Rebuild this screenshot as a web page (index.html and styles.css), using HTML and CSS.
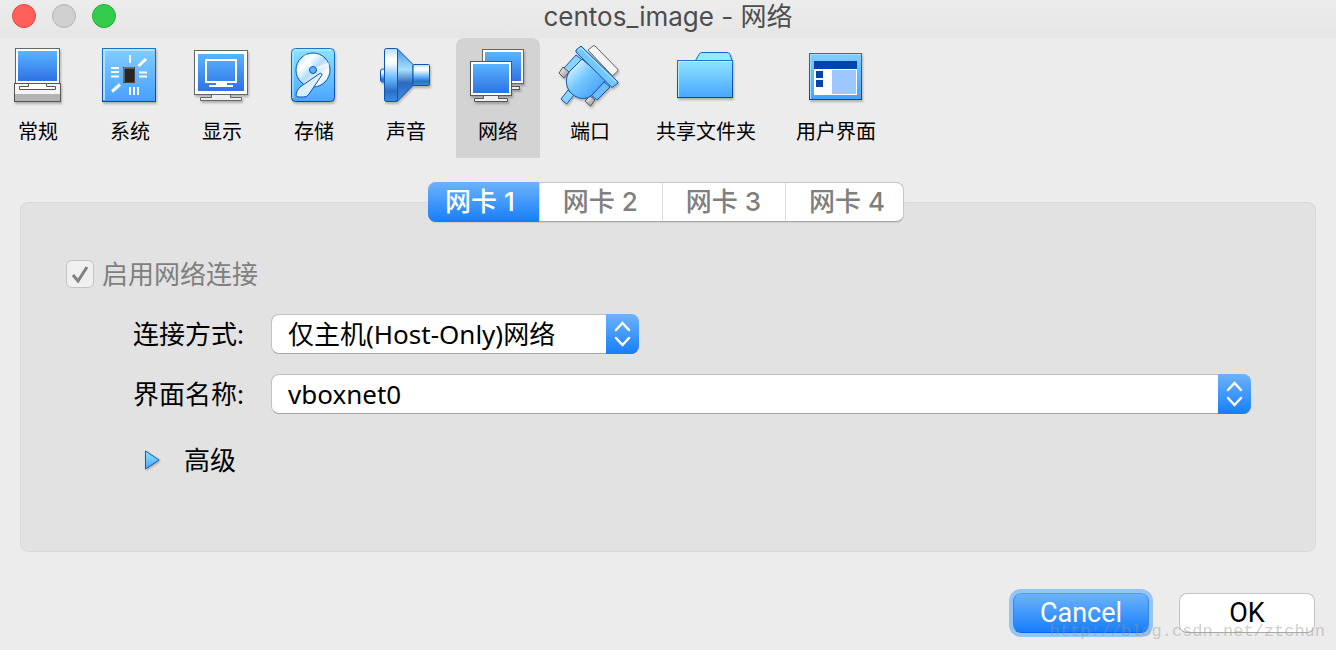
FILE: index.html
```
<!DOCTYPE html>
<html lang="zh-CN">
<head>
<meta charset="utf-8">
<title>centos_image - 网络</title>
<link rel="stylesheet" href="styles.css">
</head>
<body>
<svg class="defs" width="0" height="0" aria-hidden="true">
  <defs>
    <linearGradient id="screen" x1="0" y1="0" x2="0" y2="1"><stop offset="0" stop-color="#58b4ff"/><stop offset="1" stop-color="#2f72e4"/></linearGradient>
    <linearGradient id="plate" x1="0" y1="0" x2="0" y2="1"><stop offset="0" stop-color="#82ceff"/><stop offset="1" stop-color="#46a0ff"/></linearGradient>
    <linearGradient id="folder" x1="0" y1="0" x2="0" y2="1"><stop offset="0" stop-color="#8ce4ff"/><stop offset="1" stop-color="#4aa6ff"/></linearGradient>
    <linearGradient id="edge" x1="0" y1="0" x2="0" y2="1"><stop offset="0" stop-color="#1c74c8"/><stop offset="1" stop-color="#0c48a4"/></linearGradient>
    <linearGradient id="horn" x1="0" y1="0" x2="0" y2="1"><stop offset="0" stop-color="#b4dcf8"/><stop offset=".2" stop-color="#ffffff"/><stop offset=".3" stop-color="#f0f8ff"/><stop offset=".55" stop-color="#6cbcff"/><stop offset=".8" stop-color="#2c70c8"/><stop offset="1" stop-color="#3c8ce0"/></linearGradient>
    <linearGradient id="cone" x1="0" y1="0" x2="0" y2="1"><stop offset="0" stop-color="#4098e0"/><stop offset=".4" stop-color="#a8e0ff"/><stop offset=".65" stop-color="#2c68c0"/><stop offset="1" stop-color="#3c90e8"/></linearGradient>
    <linearGradient id="plug" x1="0" y1="0" x2="1" y2="1"><stop offset=".1" stop-color="#e8f8ff"/><stop offset=".45" stop-color="#74c8ff"/><stop offset="1" stop-color="#3490f0"/></linearGradient>
    <linearGradient id="metal" x1="0" y1="0" x2="1" y2="1"><stop offset="0" stop-color="#fff"/><stop offset="1" stop-color="#888"/></linearGradient>
    <linearGradient id="disc" x1="0" y1="0" x2="1" y2="1"><stop offset="0" stop-color="#a8d8ff"/><stop offset=".3" stop-color="#ffffff"/><stop offset=".5" stop-color="#b4dcff"/><stop offset=".75" stop-color="#ffffff"/><stop offset="1" stop-color="#90c4f8"/></linearGradient>
  </defs>
</svg>
<main class="window">
  <header class="titlebar">
    <div class="lights">
      <button class="light close" aria-label="关闭"></button>
      <button class="light minimize" aria-label="最小化"></button>
      <button class="light maximize" aria-label="缩放"></button>
    </div>
    <h1 class="title">centos_image - 网络</h1>
  </header>

  <nav class="toolbar">
    <button class="tool">
      <svg class="icon" viewBox="0 0 64 64">
        <rect x="9.500" y="4.500" width="44" height="35" fill="#fff" stroke="#666"/>
        <rect x="12" y="7" width="39" height="30" fill="url(#screen)"/>
        <rect x="8.500" y="39.500" width="46" height="18" fill="#f4f4f4" stroke="#555"/>
        <rect x="9" y="50" width="45" height="7" fill="#b4b4b4"/>
        <path d="M22.500 39.500v3h-9v3h36v-3h-9v-3z" fill="#fff" stroke="#555"/>
      </svg>
      <span>常规</span>
    </button>
    <button class="tool">
      <svg class="icon" viewBox="0 0 64 64">
        <rect x="4.500" y="4.500" width="53" height="53" fill="url(#plate)" stroke="url(#edge)"/>
        <path d="M6 56V6h50" fill="none" stroke="#b4e2ff" stroke-width="2"/>
        <rect x="25.500" y="23.500" width="11" height="15" fill="#262626" stroke="#444"/>
        <path d="M26 38V24h10" fill="none" stroke="#999"/>
        <path d="M32 11v8M41 28.500h8M41 32.500h8M13 24h8M13 28h8M13 32.500h8M32 43v8M36 43v8M40 43v8" stroke="#fff" stroke-width="2"/>
        <path d="M40.500 22l7.500-7M14 47.500l8-7" stroke="#fff" stroke-width="3"/>
      </svg>
      <span>系统</span>
    </button>
    <button class="tool">
      <svg class="icon" viewBox="0 0 64 64">
        <path d="M21.500 50.500h19v3h11v3h-41v-3h11z" fill="#eee" stroke="#666"/>
        <rect x="4.500" y="6.500" width="53" height="44" fill="#fff" stroke="#666"/>
        <rect x="8" y="10" width="46" height="37" fill="url(#screen)"/>
        <path d="M16 16h30v22H16z" fill="none" stroke="#fff" stroke-width="2"/>
        <path d="M26 38h11v3h6v2H19v-2h7z" fill="#fff"/>
      </svg>
      <span>显示</span>
    </button>
    <button class="tool">
      <svg class="icon" viewBox="0 0 64 64">
        <rect x="9.500" y="4.500" width="43" height="53" rx="4" fill="url(#folder)" stroke="url(#edge)"/>
        <path d="M11 54V8q0-2 2-2h36" fill="none" stroke="#b8f0ff"/>
        <circle cx="31" cy="26" r="17" fill="url(#disc)" stroke="#0c54b4"/>
        <path d="M31 26L23 11M31 26l16-6" stroke="#fff" stroke-width="3" opacity=".6"/>
        <circle cx="31" cy="26" r="3.500" fill="#5cb4ff" stroke="#0c54b4"/>
        <path d="M37 30q3-2 3 1L27 50q-2 3-5 3h-5q-3 0-3-2 0-4 4-8z" fill="#dcefff" stroke="#0c54b4"/>
      </svg>
      <span>存储</span>
    </button>
    <button class="tool">
      <svg class="icon" viewBox="0 0 64 64">
        <rect x="6.500" y="25" width="7" height="13" rx="2" fill="url(#horn)" stroke="#0c54b4"/>
        <path d="M23 4.500l16 16v21l-16 16z" fill="url(#cone)" stroke="#0c54b4"/>
        <rect x="39" y="20.500" width="16.500" height="21" rx="1" fill="url(#horn)" stroke="#0c54b4"/>
        <rect x="10.500" y="4.500" width="13" height="53" rx="2" fill="url(#horn)" stroke="#0c54b4"/>
      </svg>
      <span>声音</span>
    </button>
    <button class="tool selected" aria-current="page">
      <svg class="icon" viewBox="0 0 64 64">
        <rect x="40" y="42.500" width="13.500" height="3" fill="#eee" stroke="#555"/>
        <rect x="16.500" y="5.500" width="41" height="34" fill="#fff" stroke="#666"/>
        <rect x="19" y="8" width="36" height="29" fill="url(#screen)"/>
        <path d="M17.500 51.500h15v3h9v3h-33v-3h9z" fill="#eee" stroke="#555"/>
        <rect x="4.500" y="17.500" width="41" height="34" fill="#fff" stroke="#555"/>
        <rect x="7" y="20" width="36" height="29" fill="url(#screen)"/>
      </svg>
      <span>网络</span>
    </button>
    <button class="tool">
      <svg class="icon" viewBox="0 0 64 64">
        <path d="M30 6l5-4q1-.5 2 0l22.500 23q1 1 0 2l-5 5z" fill="#f4f4f4" stroke="#666"/>
        <path d="M18 11l6 5-13 14-5-6z" fill="#8cd4ff" stroke="#0c54b4"/>
        <path d="M5 23l6 5-5 6-5-5z" fill="url(#metal)" stroke="#555"/>
        <path d="M46 38l6 5-13 13-6-5z" fill="#6cbcff" stroke="#0c54b4"/>
        <path d="M32 52l5 4-4.500 6-5.500-5z" fill="url(#metal)" stroke="#555"/>
        <path d="M10 46l6 5-7.500 9-5.500-5z" fill="#8cd4ff" stroke="#0c54b4"/>
        <path d="M24 15L12 27c-6 7-4 18 2 23 7 6 16 6 21 0l13-14z" fill="url(#plug)" stroke="#0c54b4"/>
        <path d="M18 6l5-4 37 36v1l-6 4.500L18 8z" fill="#74c8ff" stroke="#0c54b4"/>
        <path d="M20 6l3-2 35 34" fill="none" stroke="#c4ecff"/>
      </svg>
      <span>端口</span>
    </button>
    <button class="tool">
      <svg class="icon" viewBox="0 0 64 64">
        <path d="M21.500 16.500l3.500-6q1-2 3-2h25q2 0 3 2l2 6z" fill="#98e8ff" stroke="#1068c8"/>
        <rect x="3.500" y="16.500" width="55" height="37" fill="url(#folder)" stroke="url(#edge)"/>
        <path d="M4.500 53V17.500H58" fill="none" stroke="#b4f0ff"/>
      </svg>
      <span>共享文件夹</span>
    </button>
    <button class="tool">
      <svg class="icon" viewBox="0 0 64 64">
        <rect x="5.500" y="9.500" width="52" height="46" fill="url(#plate)" stroke="url(#edge)"/>
        <path d="M6.500 55V10.500H57" fill="none" stroke="#a4dcff"/>
        <path d="M10 17h43v34H10z" fill="#fff"/>
        <path d="M10 17h43v8H10zM12 27h7v7h-7zM12 36h7v7h-7z" fill="#0044ac"/>
        <path d="M28 26h24v24H28z" fill="#9cc8ff"/>
      </svg>
      <span>用户界面</span>
    </button>
  </nav>

  <section class="panel">
    <div class="tabs" role="tablist">
      <button class="tab active" role="tab" aria-selected="true">网卡 1</button>
      <button class="tab" role="tab" aria-selected="false">网卡 2</button>
      <button class="tab" role="tab" aria-selected="false">网卡 3</button>
      <button class="tab" role="tab" aria-selected="false">网卡 4</button>
    </div>
    <div class="page" role="tabpanel">
      <label class="enable">
        <span class="check">
          <input class="check-input" type="checkbox" checked disabled>
          <svg class="check-mark" viewBox="0 0 28 28"><path d="M7 15l5 6 9-14" fill="none" stroke="#808080" stroke-width="3"/></svg>
        </span>
        启用网络连接
      </label>
      <div class="form">
        <label class="field-label" for="attach">连接方式:</label>
        <span class="combo combo-short">
          <select class="combo-select" id="attach"><option>仅主机(Host-Only)网络</option></select>
          <svg class="combo-arrows" viewBox="0 0 33 40"><path d="M10 16l6.500-7 6.500 7M10 24l6.500 7 6.500-7" fill="none" stroke="#fff" stroke-width="2.500" stroke-linecap="round"/></svg>
        </span>
        <label class="field-label" for="adapter">界面名称:</label>
        <span class="combo">
          <select class="combo-select" id="adapter"><option>vboxnet0</option></select>
          <svg class="combo-arrows" viewBox="0 0 33 40"><path d="M10 16l6.500-7 6.500 7M10 24l6.500 7 6.500-7" fill="none" stroke="#fff" stroke-width="2.500" stroke-linecap="round"/></svg>
        </span>
      </div>
      <button class="advanced" aria-expanded="false">
        <svg class="advanced-icon" viewBox="0 0 16 20"><path d="M1.500 1v18L15 10z" fill="url(#folder)" stroke="#1060b8"/></svg>
        高级
      </button>
    </div>
  </section>

  <footer class="actions">
    <button class="action primary">Cancel</button>
    <button class="action">OK</button>
  </footer>
  <div class="watermark">http://blog.csdn.net/ztchun</div>
</main>
</body>
</html>
```
FILE: styles.css
```
* { box-sizing: border-box; }

body {
  margin: 0;
  background: #ececec;
  color: #000;
  font: 26px/38px "Noto Sans", "Noto Sans CJK SC", sans-serif;
}

button, select, input { font: inherit; color: inherit; margin: 0; }
button { border: 0; padding: 0; background: none; }

.defs { position: absolute; }

.window {
  position: relative;
  min-height: 100vh;
  overflow: hidden;
}

.titlebar {
  display: grid;
  grid-template-columns: 1fr auto 1fr;
  align-items: center;
  height: 38px;
  padding: 0 12px;
  background: linear-gradient(#ececec, #e6e6e6);
}

.lights { display: flex; gap: 16px; padding-bottom: 6px; }

.light {
  width: 24px;
  height: 24px;
  border: 1px solid #e2463f;
  border-radius: 50%;
  background: #ff605c;
}
.minimize { background: #d0d0d0; border-color: #b4b4b4; }
.maximize { background: #35cb4b; border-color: #22ac34; }

.title {
  margin: 0;
  padding-bottom: 4px;
  color: #4d4d4d;
  font: 26px/34px Inter, "Noto Sans CJK SC", sans-serif;
}

.toolbar { display: flex; gap: 8px; margin-left: -4px; }

.tool {
  display: flex;
  flex-direction: column;
  align-items: center;
  min-width: 84px;
  height: 120px;
  padding: 6px 16px;
  border-radius: 8px 8px 0 0;
  font-size: 20px;
  line-height: 28px;
}
.tool span { padding-top: 10px; white-space: nowrap; }
.selected { background: #d3d3d3; }

.icon {
  width: 64px;
  height: 64px;
  margin: 0 -6px;
  filter: drop-shadow(1px 2px 1px rgba(0, 0, 0, .25));
}

.panel {
  min-height: 350px;
  margin: 44px 20px 0;
  padding-right: 4px;
  border: 1px solid #d9d9d9;
  border-radius: 8px;
  background: #e2e2e2;
}

.tabs {
  display: flex;
  width: max-content;
  margin: -21px auto 0;
  border: 1px solid #c8c8c8;
  border-bottom-color: #aaa;
  border-radius: 8px;
  background: #fff;
  box-shadow: 0 1px 1px rgba(0, 0, 0, .1);
}

.tab {
  padding: 0 18px 0 23px;
  border-left: 1px solid #ddd;
  color: #7f7f7f;
  font-family: Inter, "Noto Sans CJK SC", sans-serif;
  font-weight: 500;
}
.tab:not(:last-child) { padding-right: 24px; }
.tab.active {
  margin: -1px 0 -1px -1px;
  padding-left: 17px;
  border: 0;
  border-radius: 8px 0 0 8px;
  background: linear-gradient(#6cb3fa, #167efb);
  color: #fff;
}

.page { padding: 33px 60px 0 45px; }

.enable {
  display: flex;
  align-items: center;
  gap: 8px;
  width: max-content;
  color: #7f7f7f;
}

.check { display: grid; }
.check-input, .check-mark { grid-area: 1 / 1; width: 28px; height: 28px; }
.check-input {
  appearance: none;
  border: 1px solid #c4c4c4;
  border-radius: 6px;
  background: #f0f0f0;
}
.check-mark { pointer-events: none; }

.form {
  display: grid;
  grid-template-columns: 178px 1fr;
  gap: 20px 27px;
  align-items: center;
  margin-top: 21px;
}

.field-label { text-align: right; }

.combo { display: grid; grid-template-columns: 1fr 33px; }
.combo-short { width: 368px; }

.combo-select {
  grid-area: 1 / 1 / 2 / 3;
  appearance: none;
  height: 40px;
  padding: 0 48px 0 16px;
  border: 1px solid #c2c2c2;
  border-bottom-color: #a6a6a6;
  border-radius: 8px;
  background: #fff;
}

.combo-arrows {
  grid-area: 1 / 2;
  width: 33px;
  height: 40px;
  border-radius: 0 8px 8px 0;
  background: linear-gradient(#6cb3fa, #167efb);
  pointer-events: none;
}

.advanced {
  display: flex;
  align-items: center;
  gap: 24px;
  margin: 27px 0 0 78px;
}
.advanced-icon {
  width: 16px;
  height: 20px;
  filter: drop-shadow(1px 1px 1px rgba(0, 0, 0, .3));
}

.actions {
  display: flex;
  justify-content: flex-end;
  gap: 30px;
  padding: 41px 21px 0 0;
}

.action {
  width: 136px;
  height: 40px;
  border: 1px solid #c4c4c4;
  border-bottom-color: #a8a8a8;
  border-radius: 8px;
  background: #fff;
  font-family: Roboto, sans-serif;
  font-size: 27px;
}
.primary {
  border-color: #4a9cf0 #3088f0 #0c64f0;
  background: linear-gradient(#6cb3fa, #167efb);
  box-shadow: 0 0 0 4px #98c4f2;
  color: #fff;
}

.watermark {
  position: absolute;
  right: 11px;
  bottom: 6px;
  color: rgba(150, 150, 140, .45);
  font: 17px/24px "Liberation Mono", monospace;
  pointer-events: none;
}
```
